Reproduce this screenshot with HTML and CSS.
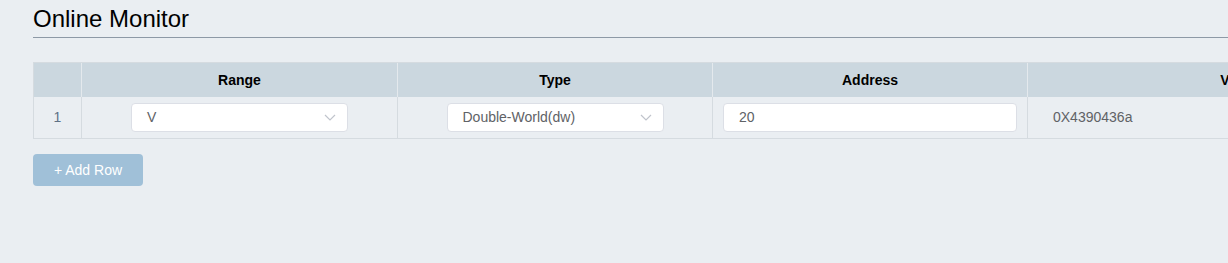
FILE: index.html
```html
<!DOCTYPE html>
<html lang="en">
<head>
	<meta charset="UTF-8"/>
	<title>Online Monitor</title>
	<link rel="stylesheet" href="styles.css">
</head>
<body>
<div class="page">
	<h2 class="page_title">Online Monitor</h2>
	<table class="monitor">
		<thead>
			<tr>
				<th class="col_idx"></th>
				<th class="col_range">Range</th>
				<th class="col_type">Type</th>
				<th class="col_addr">Address</th>
				<th class="col_val">Value</th>
			</tr>
		</thead>
		<tbody>
			<tr>
				<td class="idx">1</td>
				<td class="center">
					<div class="select">
						<span>V</span>
						<svg class="arrow" width="12" height="7" viewBox="0 0 12 7"><path d="M1 1l5 5 5-5" fill="none" stroke="#c0c4cc" stroke-width="1.2"/></svg>
					</div>
				</td>
				<td class="center">
					<div class="select">
						<span>Double-World(dw)</span>
						<svg class="arrow" width="12" height="7" viewBox="0 0 12 7"><path d="M1 1l5 5 5-5" fill="none" stroke="#c0c4cc" stroke-width="1.2"/></svg>
					</div>
				</td>
				<td class="addr"><input class="input" type="text" value="20"/></td>
				<td class="val">0X4390436a</td>
			</tr>
		</tbody>
	</table>
	<button class="btn_add">+ Add Row</button>
</div>
</body>
</html>
```

FILE: styles.css
```css
*{margin:0;padding:0;box-sizing:border-box;}
html,body{height:100%;}
body{font:14px "Liberation Sans",Arial,sans-serif;background:#eaeef2;color:#606266;overflow:hidden;}
.page{padding-left:33px;width:1500px;}
.page_title{font-size:24px;font-weight:normal;line-height:28px;color:#000;padding:5px 0 4px;border-bottom:1px solid #8d99a6;width:1195px;}
.monitor{margin-top:24px;border-collapse:separate;border-spacing:0;table-layout:fixed;width:1417px;border:1px solid #d5dbe0;border-right:0;}
.monitor th{height:34px;padding-bottom:1px;background:#cbd7df;color:#000;font-size:14px;font-weight:bold;text-align:center;border-right:1px solid #e4e9ed;}
.monitor td{height:41px;padding-bottom:1px;border-right:1px solid #d5dbe0;}
.col_idx{width:48px;}
.col_range{width:316px;}
.col_type{width:315px;}
.col_addr{width:315px;}
.col_val{width:422px;}
.idx{text-align:center;color:#5f7186;}
.center{text-align:center;}
.select{display:inline-flex;align-items:center;justify-content:space-between;width:217px;height:29px;padding:0 11px 0 15px;background:#fff;border:1px solid #dcdfe6;border-radius:4px;text-align:left;}
.arrow{display:block;}
.addr{padding:0 10px;}
.input{display:block;width:100%;height:29px;padding:0 15px;background:#fff;border:1px solid #dcdfe6;border-radius:4px;font:14px "Liberation Sans",Arial,sans-serif;color:#606266;outline:none;}
.val{padding-left:25px;}
.btn_add{display:block;margin-top:15px;width:110px;height:32px;background:#a0c0d8;border:0;border-radius:4px;color:#fff;font:14px "Liberation Sans",Arial,sans-serif;cursor:pointer;}
```
